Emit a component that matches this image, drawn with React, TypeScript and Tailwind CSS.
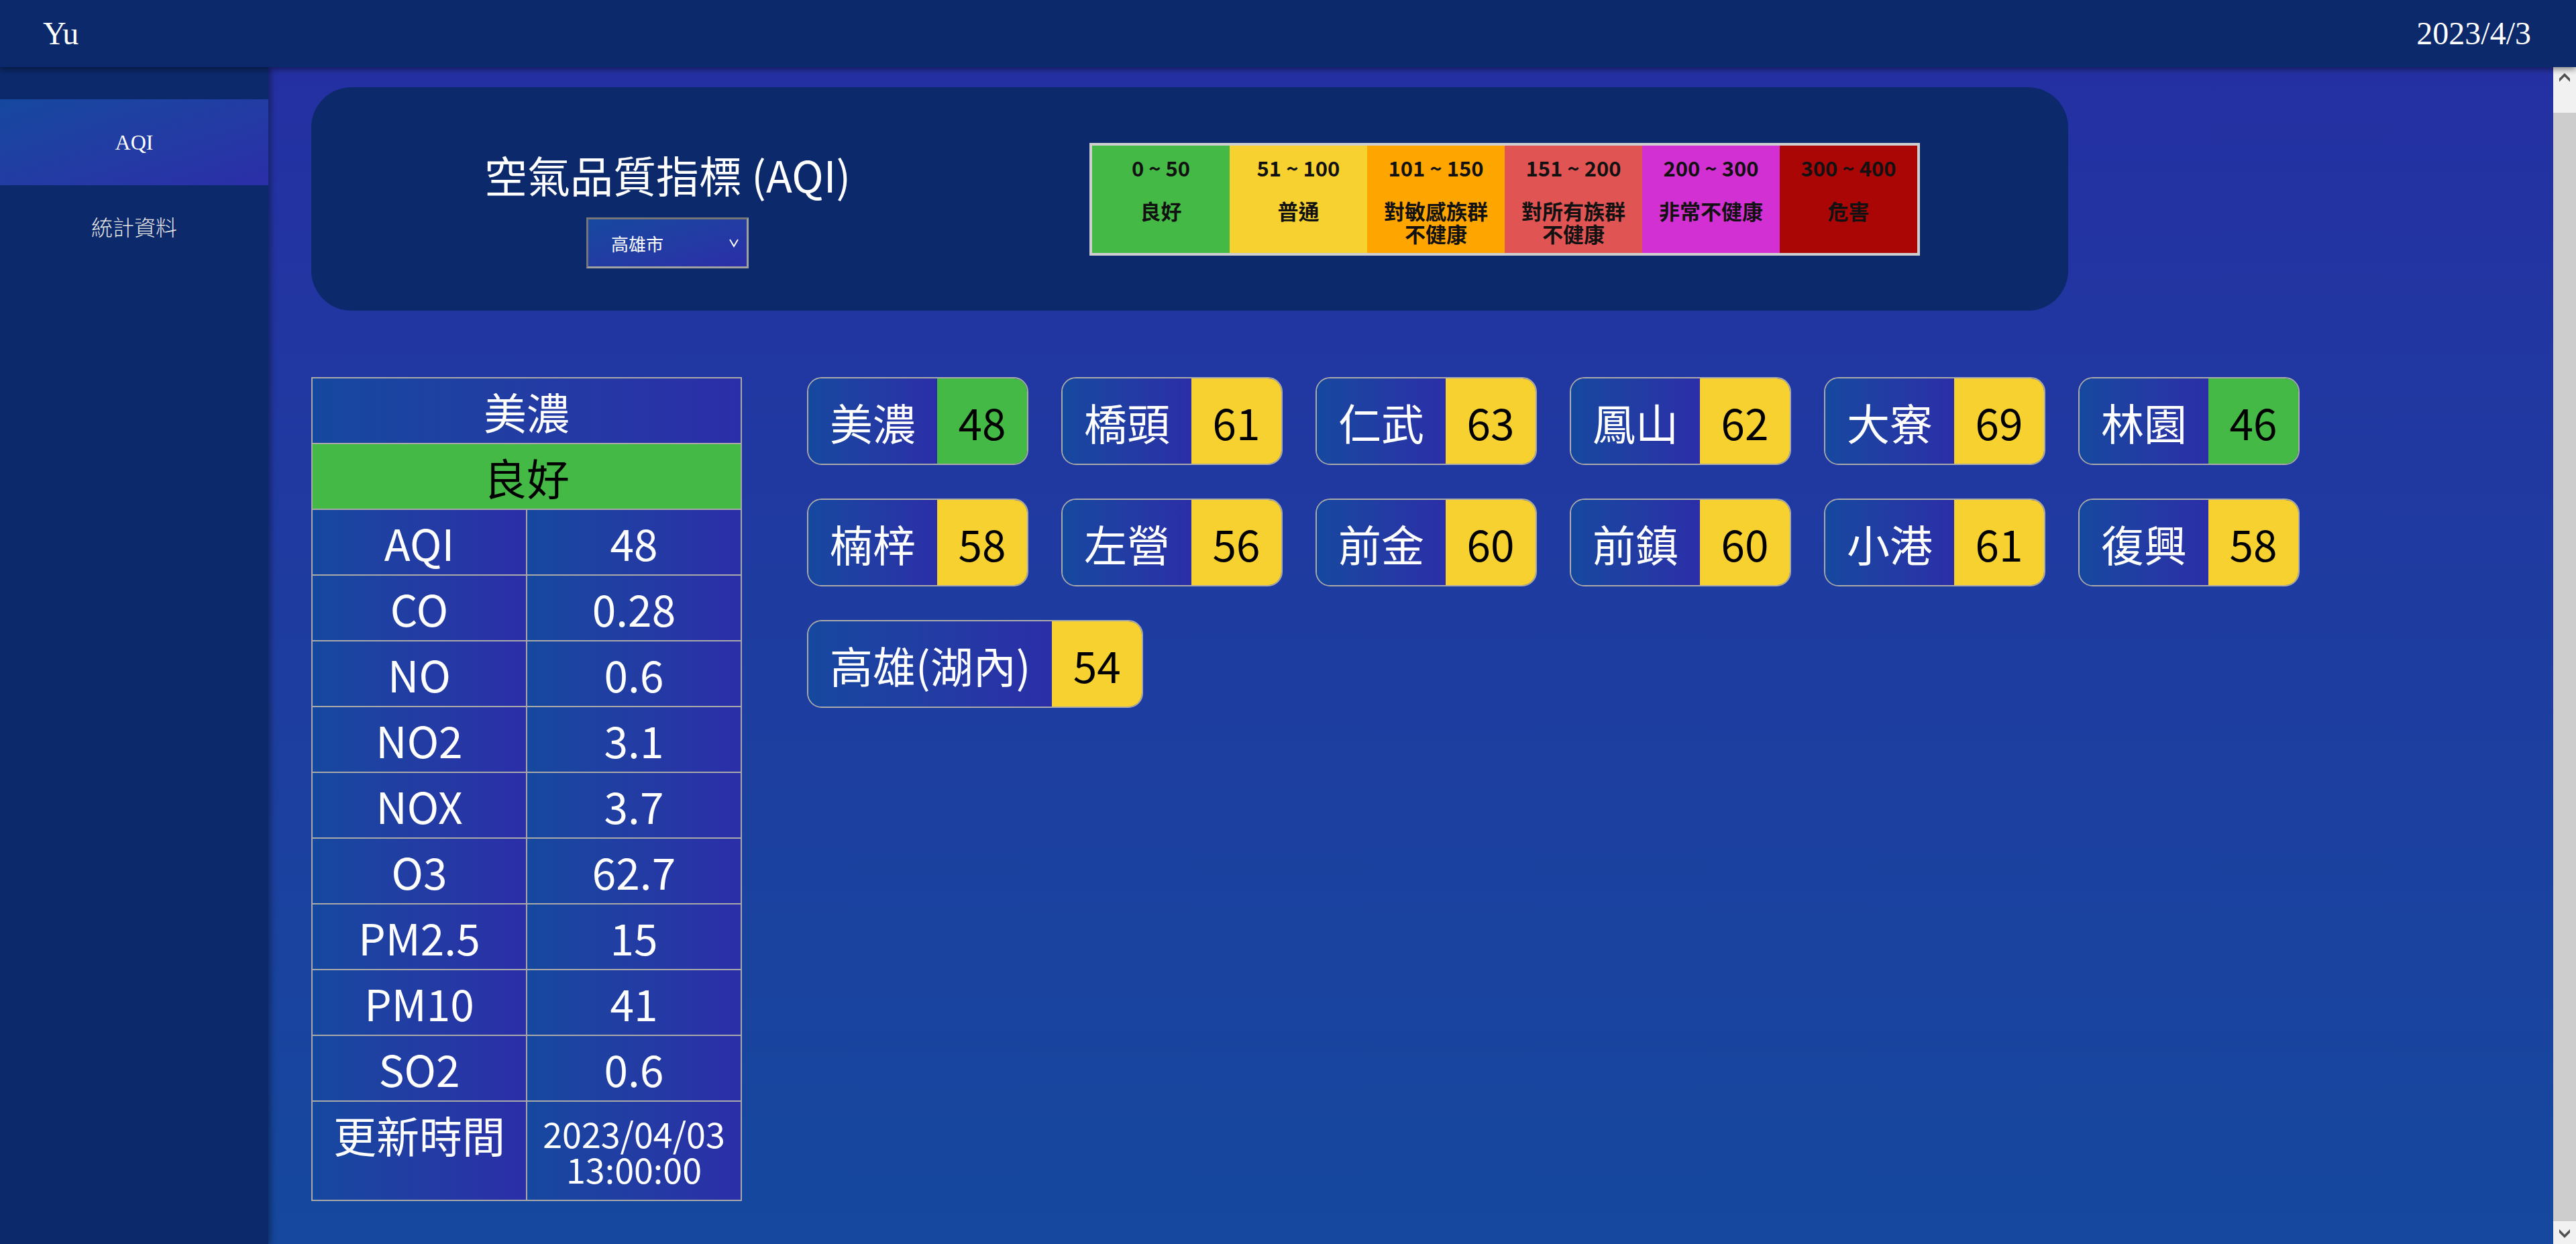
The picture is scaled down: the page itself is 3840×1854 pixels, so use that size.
import React from "react";

const CJK = "font-['Noto_Sans_CJK_TC','Noto_Sans',sans-serif]";
const SERIF = "font-['Liberation_Serif','Noto_Sans_CJK_TC',serif]";
const GRAD_R = "bg-linear-to-r from-[#15489f] to-[#2b2ea8]";

const legend = [
  { range: "0 ~ 50", label: ["良好"], bg: "bg-[#45b945]" },
  { range: "51 ~ 100", label: ["普通"], bg: "bg-[#f6d12f]" },
  { range: "101 ~ 150", label: ["對敏感族群", "不健康"], bg: "bg-[#ffa500]" },
  { range: "151 ~ 200", label: ["對所有族群", "不健康"], bg: "bg-[#e05454]" },
  { range: "200 ~ 300", label: ["非常不健康"], bg: "bg-[#d330d3]" },
  { range: "300 ~ 400", label: ["危害"], bg: "bg-[#ab0606]" },
];

const GREEN = "bg-[#45b945]";
const YELLOW = "bg-[#f6d12f]";

const stations = [
  { name: "美濃", v: 48, c: GREEN },
  { name: "橋頭", v: 61, c: YELLOW },
  { name: "仁武", v: 63, c: YELLOW },
  { name: "鳳山", v: 62, c: YELLOW },
  { name: "大寮", v: 69, c: YELLOW },
  { name: "林園", v: 46, c: GREEN },
  { name: "楠梓", v: 58, c: YELLOW },
  { name: "左營", v: 56, c: YELLOW },
  { name: "前金", v: 60, c: YELLOW },
  { name: "前鎮", v: 60, c: YELLOW },
  { name: "小港", v: 61, c: YELLOW },
  { name: "復興", v: 58, c: YELLOW },
  { name: "高雄(湖內)", v: 54, c: YELLOW },
];

const rows: [string, string][] = [
  ["AQI", "48"],
  ["CO", "0.28"],
  ["NO", "0.6"],
  ["NO2", "3.1"],
  ["NOX", "3.7"],
  ["O3", "62.7"],
  ["PM2.5", "15"],
  ["PM10", "41"],
  ["SO2", "0.6"],
];

function Scrollbar() {
  return (
    <div className="w-[34px] shrink-0 bg-[#f1f1f1] flex flex-col">
      <div className="h-[34px] flex items-start justify-center pt-[9px]">
        <svg width="16" height="14" viewBox="0 0 16 14">
          <polygon points="8,0 16,8 16,13 8,5 0,13 0,8" fill="#505050" />
        </svg>
      </div>
      <div className="h-[34px]" />
      <div className="flex-1 bg-[#cdcdcd]" />
      <div className="h-[34px] flex items-start justify-center pt-[11px]">
        <svg width="16" height="14" viewBox="0 0 16 14">
          <polygon points="0,1 8,9 16,1 16,6 8,14 0,6" fill="#505050" />
        </svg>
      </div>
    </div>
  );
}

export default function App() {
  return (
    <div className="w-full h-screen overflow-hidden flex flex-col bg-[#0c296b]">
      <header
        className={`relative z-20 h-[100px] shrink-0 bg-[#0c296b] flex items-center justify-between pl-[64px] pr-[67px] shadow-[0_4px_8px_rgba(0,0,0,0.4)] text-white text-[48px] ${SERIF}`}
      >
        <span>Yu</span>
        <span>2023/4/3</span>
      </header>
      <div className="flex flex-1 min-h-0">
        <aside className="relative z-10 w-[400px] shrink-0 bg-[#0c296b] pt-[48px] shadow-[4px_0_8px_rgba(0,0,0,0.35)]">
          <div
            className={`h-[128px] flex items-center justify-center bg-linear-to-br from-[#15489f] to-[#2b2ea8] text-white text-[32px] ${SERIF}`}
          >
            AQI
          </div>
          <div
            className={`h-[128px] flex items-center justify-center text-[#e4e4e4] text-[32px] font-light ${SERIF}`}
          >
            統計資料
          </div>
        </aside>
        <main className="flex-1 min-w-0 bg-linear-to-b from-[#2430a2] to-[#15489e] pl-[64px] pr-[64px] pt-[30px] overflow-hidden">
          {/* top panel */}
          <div className="w-[2619px] h-[333px] rounded-[60px] bg-[#0c296b] flex items-center">
            <div className="w-[1062px] self-start pt-[89px] flex flex-col items-center">
              <div className={`text-white text-[64px] leading-[80px] ${CJK}`}>空氣品質指標 (AQI)</div>
              <div className="mt-[25px] w-[242px] h-[76px] border-[3px] border-t-[#767676] border-l-[#767676] border-r-[#a0a0a0] border-b-[#a0a0a0] bg-linear-to-br from-[#15489f] to-[#2b2ea8] flex items-center justify-between pl-[34px] pr-[11px]">
                <span className={`text-white text-[26px] ${CJK}`}>高雄市</span>
                <svg width="16" height="14" viewBox="0 0 16 14">
                  <polyline points="2,2 8,12 14,2" fill="none" stroke="#ffffff" strokeWidth="2" />
                </svg>
              </div>
            </div>
            <div className="ml-[98px] border-4 border-[#cfcfcf] flex h-[168px]">
              {legend.map((l) => (
                <div
                  key={l.range}
                  className={`w-[205px] h-full ${l.bg} flex flex-col items-center pt-[16px] text-[#111111] font-bold text-[31px] ${CJK}`}
                >
                  <div className="leading-[34px]">{l.range}</div>
                  <div className="mt-[30px] flex flex-col items-center">
                    {l.label.map((t) => (
                      <div key={t} className="leading-[34px]">
                        {t}
                      </div>
                    ))}
                  </div>
                </div>
              ))}
            </div>
          </div>

          {/* lower content */}
          <div className="mt-[99px] flex items-start">
            <div className={`w-[642px] shrink-0 border-x-2 border-b-2 border-[#a9a9a9] text-white text-[64px] ${CJK}`}>
              <div className={`h-[98px] border-t-2 border-[#a9a9a9] flex items-center justify-center ${GRAD_R}`}>
                美濃
              </div>
              <div className="h-[98px] border-t-2 border-[#a9a9a9] flex items-center justify-center bg-[#45b945] text-black">
                良好
              </div>
              {rows.map(([k, v]) => (
                <div key={k} className="h-[98px] border-t-2 border-[#a9a9a9] flex">
                  <div className={`flex-1 flex items-center justify-center ${GRAD_R}`}>{k}</div>
                  <div className={`flex-1 border-l-2 border-[#a9a9a9] flex items-center justify-center ${GRAD_R}`}>
                    {v}
                  </div>
                </div>
              ))}
              <div className="h-[148px] border-t-2 border-[#a9a9a9] flex">
                <div className={`flex-1 flex justify-center leading-[96px] ${GRAD_R}`}>更新時間</div>
                <div
                  className={`flex-1 border-l-2 border-[#a9a9a9] flex flex-col items-center justify-center text-[52px] leading-[53px] ${GRAD_R}`}
                >
                  <div>2023/04/03</div>
                  <div>13:00:00</div>
                </div>
              </div>
            </div>

            <div className="ml-[97px] flex-1 flex flex-wrap content-start gap-x-[49px] gap-y-[50px]">
              {stations.map((s) => (
                <div
                  key={s.name}
                  className={`h-[131px] flex border-2 border-[#aaaaaa] rounded-[22px] overflow-hidden text-[64px] ${CJK}`}
                >
                  <div className={`flex items-center px-[32px] text-white ${GRAD_R}`}>{s.name}</div>
                  <div className={`w-[134px] flex items-center justify-center text-black ${s.c}`}>{s.v}</div>
                </div>
              ))}
            </div>
          </div>
        </main>
        <Scrollbar />
      </div>
    </div>
  );
}
